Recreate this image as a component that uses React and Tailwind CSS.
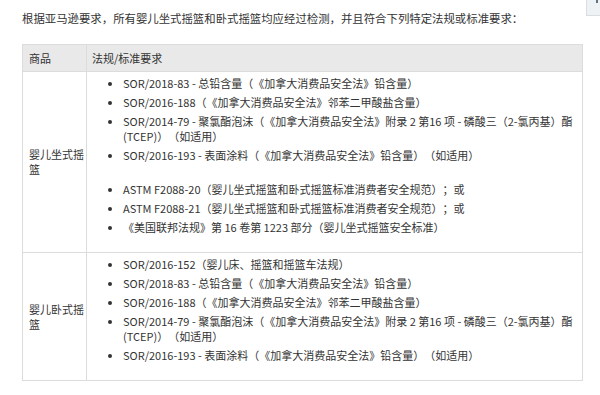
import React from "react";

const cribItems = [
  "SOR/2018-83 - 总铅含量（《加拿大消费品安全法》铅含量）",
  "SOR/2016-188（《加拿大消费品安全法》邻苯二甲酸盐含量）",
  "SOR/2014-79 - 聚氯酯泡沫（《加拿大消费品安全法》附录 2 第16 项 - 磷酸三（2-氯丙基）酯 (TCEP)）（如适用）",
  "SOR/2016-193 - 表面涂料（《加拿大消费品安全法》铅含量）（如适用）",
];

const astmItems = [
  "ASTM F2088-20（婴儿坐式摇篮和卧式摇篮标准消费者安全规范）；或",
  "ASTM F2088-21（婴儿坐式摇篮和卧式摇篮标准消费者安全规范）；或",
  "《美国联邦法规》第 16 卷第 1223 部分（婴儿坐式摇篮安全标准）",
];

const lieItems = [
  "SOR/2016-152（婴儿床、摇篮和摇篮车法规）",
  "SOR/2018-83 - 总铅含量（《加拿大消费品安全法》铅含量）",
  "SOR/2016-188（《加拿大消费品安全法》邻苯二甲酸盐含量）",
  "SOR/2014-79 - 聚氯酯泡沫（《加拿大消费品安全法》附录 2 第16 项 - 磷酸三（2-氯丙基）酯 (TCEP)）（如适用）",
  "SOR/2016-193 - 表面涂料（《加拿大消费品安全法》铅含量）（如适用）",
];

function Bullets({ items }) {
  return (
    <ul className="list-disc pl-[30px] marker:text-[#333]">
      {items.map((item, i) => (
        <li key={i} className="mb-[4px] leading-[15px]">
          {item}
        </li>
      ))}
    </ul>
  );
}

export default function App() {
  return (
    <div
      className="relative min-h-[395px] bg-white text-[11px] leading-[15px] text-[#333] [text-spacing-trim:space-all]"
      style={{ fontFamily: '"Noto Sans CJK SC", "Liberation Sans", sans-serif' }}
    >
      <div className="absolute right-0 top-0 h-[16px] w-[14px] border-b border-l border-[#d8dde1] bg-[#eef2f4]">
        <div className="absolute right-[2px] top-0 h-[3px] w-[2px] bg-[#5f7380]" />
      </div>

      <div className="px-[22px] pt-[11px]">
        <p className="text-[11.4px]">根据亚马逊要求，所有婴儿坐式摇篮和卧式摇篮均应经过检测，并且符合下列特定法规或标准要求：</p>

        <table className="mt-[18px] w-[561px] table-fixed border-collapse border border-[#dcdcdc]">
          <colgroup>
            <col className="w-[64px]" />
            <col />
          </colgroup>
          <thead>
            <tr className="h-[27px] bg-[#e9e9e9]">
              <th className="border border-[#dcdcdc] pl-[6px] text-left font-normal">商品</th>
              <th className="border border-[#dcdcdc] pl-[5px] text-left font-normal">法规/标准要求</th>
            </tr>
          </thead>
          <tbody>
            <tr>
              <td className="border border-[#dcdcdc] pl-[6px] pr-[1px] align-middle">婴儿坐式摇篮</td>
              <td className="border border-[#dcdcdc] pb-[13px] pl-[6px] pr-[8px] pt-[4px] align-top">
                <Bullets items={cribItems} />
                <div className="h-[15px]" />
                <Bullets items={astmItems} />
              </td>
            </tr>
            <tr>
              <td className="border border-[#dcdcdc] pl-[6px] pr-[1px] align-middle">婴儿卧式摇篮</td>
              <td className="border border-[#dcdcdc] pb-[13px] pl-[6px] pr-[8px] pt-[4px] align-top">
                <Bullets items={lieItems} />
              </td>
            </tr>
          </tbody>
        </table>
      </div>
    </div>
  );
}
